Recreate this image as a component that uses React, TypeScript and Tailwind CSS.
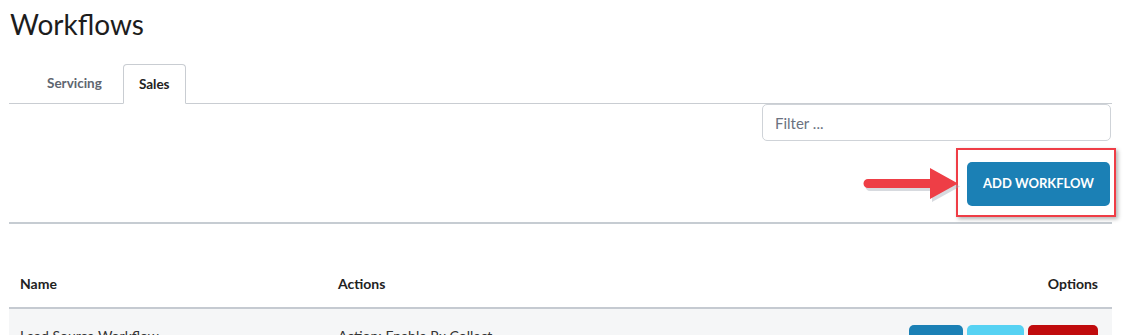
import React from "react";

export default function App() {
  const font = { fontFamily: "Lato, 'Open Sans', sans-serif" };
  return (
    <div className="w-[1125px] h-[335px] overflow-hidden bg-white text-[#212529]" style={font}>
      <div className="pl-[9px] pr-[13px]">
        <h1 className="pt-[6px] text-[28px] leading-[36px] font-normal text-[#1d1d1d] pl-[1px]">Workflows</h1>

        {/* Tabs */}
        <div className="mt-[22px] flex items-end border-b border-[#c9cdd2] pl-[22px] h-[40px]">
          <div className="h-[39px] px-[16px] flex items-center text-[13.5px] font-bold text-[#5f6670]">Servicing</div>
          <div className="ml-[5px] h-[40px] -mb-px px-[15px] flex items-center text-[13.5px] font-bold text-[#222] bg-white border border-[#c9cdd2] border-b-white rounded-t-[4px]">
            Sales
          </div>
        </div>

        {/* Filter */}
        <div className="flex justify-end pr-[1px]">
          <input
            placeholder="Filter ..."
            className="w-[349px] h-[37px] border border-[#cfd3d8] rounded-[5px] px-[12px] text-[15px] text-[#333] placeholder:text-[#6b7280] outline-none"
            style={font}
          />
        </div>

        {/* Add workflow */}
        <div className="relative flex justify-end pt-[21px] pb-[16px] pr-[2px]">
          <button className="w-[143px] h-[44px] rounded-[5px] bg-[#1b80b5] text-white text-[13px] font-bold" style={font}>
            ADD WORKFLOW
          </button>
          {/* annotation box */}
          <div className="absolute left-[947px] top-[7px] w-[160px] h-[69px] border-[2px] border-[#ef3d46] shadow-[2px_2px_4px_rgba(0,0,0,0.3)]" />
          {/* arrow */}
          <svg className="absolute left-[850px] top-[27px]" width="106" height="36" viewBox="0 0 106 36">
            <path
              d="M9 11 L71 11 L71 0 L99 15.5 L71 31 L71 20 L9 20 A4.5 4.5 0 0 1 9 11 Z"
              transform="translate(2 3)"
              fill="#9ca3af"
              opacity="0.4"
            />
            <path d="M9 11 L71 11 L71 0 L99 15.5 L71 31 L71 20 L9 20 A4.5 4.5 0 0 1 9 11 Z" fill="#ee3e46" />
          </svg>
        </div>

        <div className="h-[2px] bg-[#c6ccd2]" />

        {/* Table */}
        <div className="mt-[35px]">
          <div className="grid grid-cols-[318px_1fr_auto] items-center h-[48px] px-[11px] text-[14px] font-bold text-[#222]">
            <div>Name</div>
            <div>Actions</div>
            <div className="pr-[3px]">Options</div>
          </div>
          <div className="h-[2px] bg-[#c5cad1]" />
          <div className="bg-[#f5f6f7] h-[60px] grid grid-cols-[318px_1fr_auto] px-[11px] text-[14px] text-[#333]">
            <div className="pt-[16px]">Lead Source Workflow</div>
            <div className="pt-[16px]">Action: Enable Rx Collect</div>
            <div className="flex gap-[4px] pt-[16px] pr-[3px]">
              <div className="w-[54px] h-[34px] rounded-[5px] bg-[#1b80b5]" />
              <div className="w-[57px] h-[34px] rounded-[5px] bg-[#56d2f3]" />
              <div className="w-[70px] h-[34px] rounded-[5px] bg-[#c00b0d]" />
            </div>
          </div>
        </div>
      </div>
    </div>
  );
}
